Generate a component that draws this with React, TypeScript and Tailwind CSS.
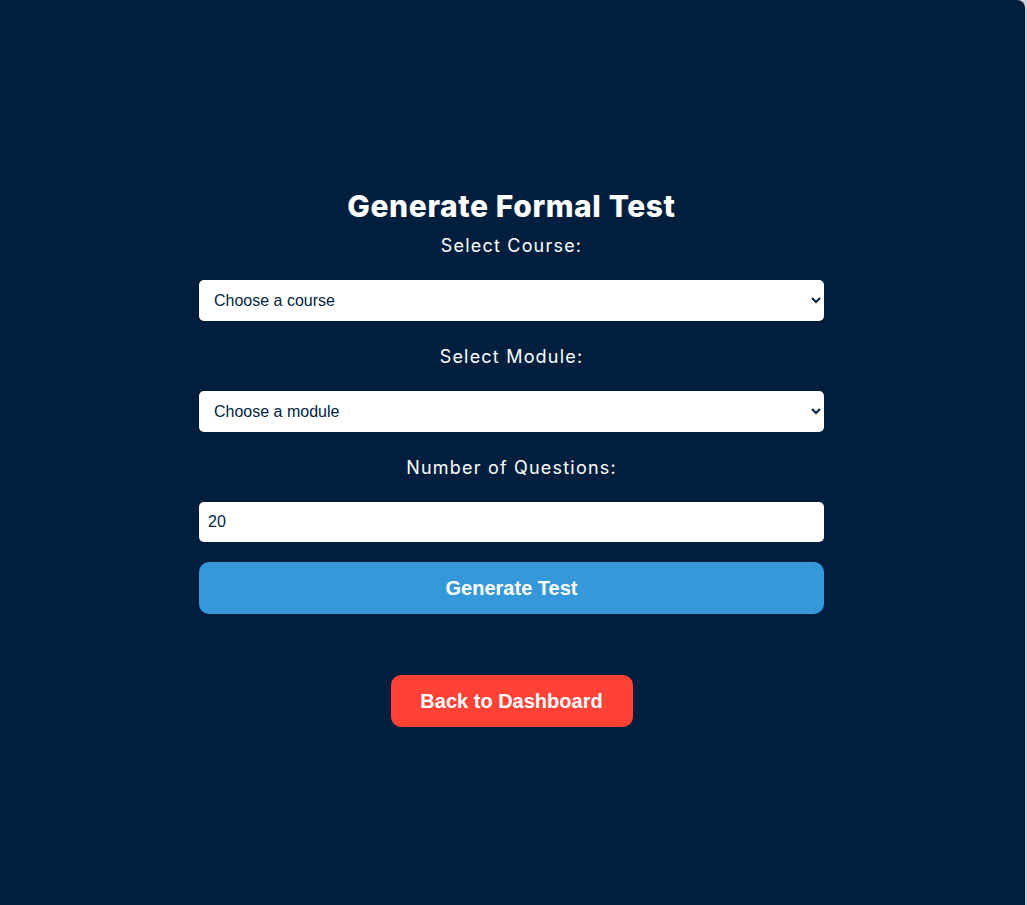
import React from "react";

export default function App() {
  return (
    <div className="w-[1027px] h-[905px] bg-[#c9d3dd] flex overflow-hidden">
      <div className="w-[1025px] h-[905px] bg-[#001f3f] rounded-tr-[8px] flex flex-col items-center pt-[188px] pr-[2px]">
        <div className="w-[625px] flex flex-col items-stretch">
          <h2 className="text-center text-white font-extrabold text-[30px] leading-[36px] font-['Inter','Liberation_Sans',sans-serif] tracking-[0.6px]">
            Generate Formal Test
          </h2>
          <label className="mt-[7.5px] mb-[21.5px] text-center text-white text-[18px] leading-[27px] font-['Inter','Liberation_Sans',sans-serif] tracking-[1.2px]">
            Select Course:
          </label>
          <select className="h-[41px] w-full bg-white rounded-[5px] border-0 pl-[11px] pr-[4px] text-[16px] text-[#001f3f] font-['Liberation_Sans',Arial,sans-serif] outline-none">
            <option>Choose a course</option>
          </select>
          <label className="mt-[21.5px] mb-[21.5px] text-center text-white text-[18px] leading-[27px] font-['Inter','Liberation_Sans',sans-serif] tracking-[1.2px]">
            Select Module:
          </label>
          <select className="h-[41px] w-full bg-white rounded-[5px] border-0 pl-[11px] pr-[4px] text-[16px] text-[#001f3f] font-['Liberation_Sans',Arial,sans-serif] outline-none">
            <option>Choose a module</option>
          </select>
          <label className="mt-[21.5px] mb-[21.5px] text-center text-white text-[18px] leading-[27px] font-['Inter','Liberation_Sans',sans-serif] tracking-[1.2px]">
            Number of Questions:
          </label>
          <input
            type="number"
            defaultValue={20}
            className="h-[40px] w-full bg-white rounded-[5px] border-0 px-[9px] text-[16px] text-[#001f3f] font-['Liberation_Sans',Arial,sans-serif] outline-none [appearance:textfield]"
          />
          <button className="mt-[20px] h-[52px] w-full bg-[#3498db] rounded-[10px] text-white font-bold text-[20px] font-['Liberation_Sans',Arial,sans-serif]">
            Generate Test
          </button>
        </div>
        <button className="mt-[61px] h-[52px] w-[242px] bg-[#ff4136] rounded-[10px] text-white font-bold text-[20px] font-['Liberation_Sans',Arial,sans-serif]">
          Back to Dashboard
        </button>
      </div>
    </div>
  );
}
